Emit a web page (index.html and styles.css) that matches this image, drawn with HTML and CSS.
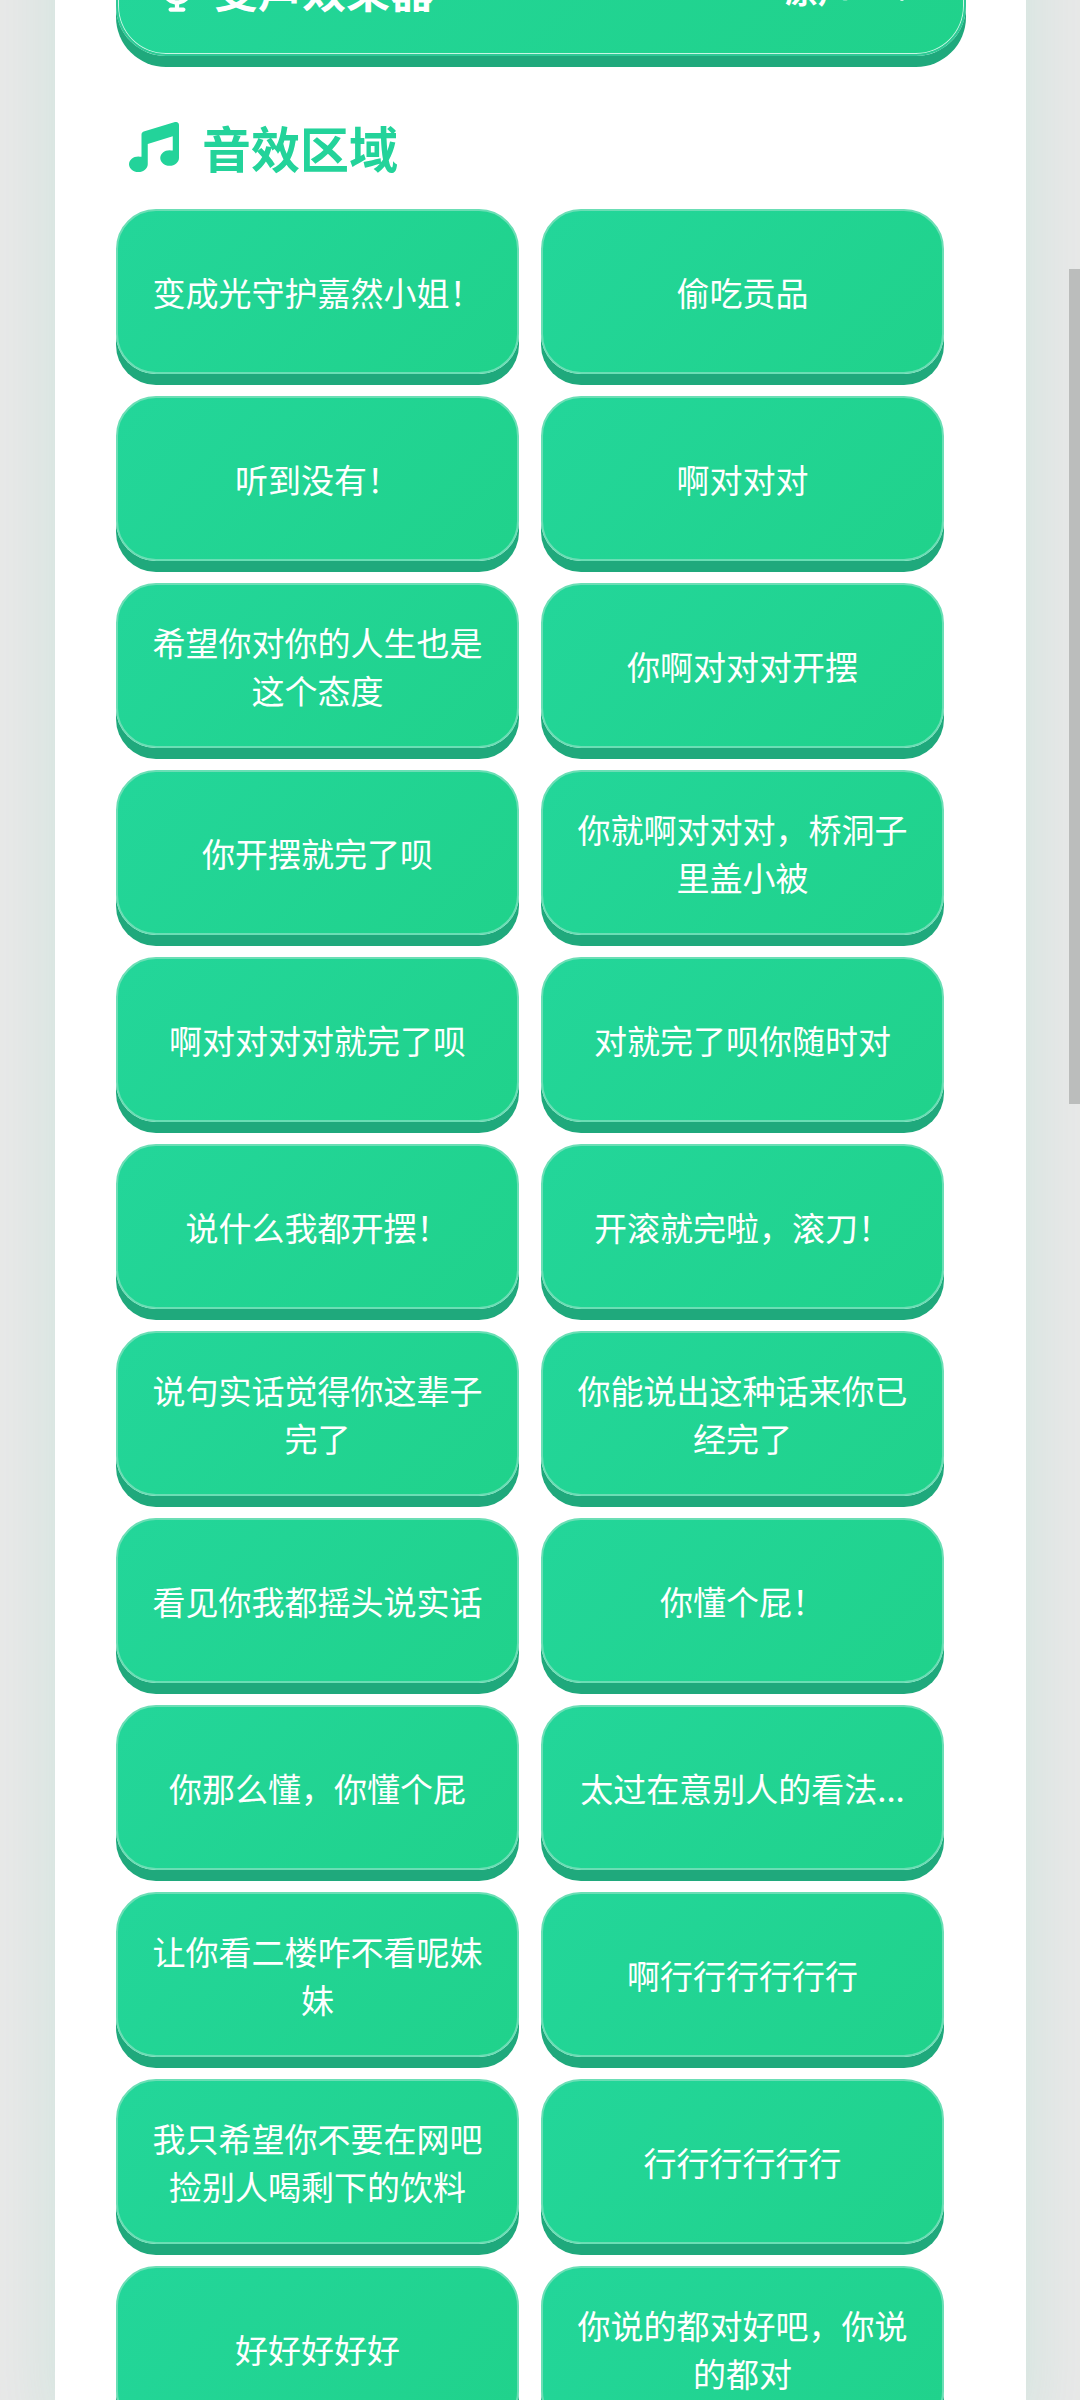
FILE: index.html
```html
<!DOCTYPE html>
<html lang="zh-CN">
<head>
<meta charset="utf-8">
<meta name="viewport" content="width=device-width, initial-scale=1">
<title>音效区域</title>
<link rel="stylesheet" href="styles.css">
</head>
<body>
<div class="viewport">
<main class="sheet">
  <button class="effector" type="button">
    <svg class="mic" viewBox="0 0 384 512" aria-hidden="true"><path d="M192 0c-53 0-96 43-96 96v160c0 53 43 96 96 96s96-43 96-96V96c0-53-43-96-96-96zM64 216c0-13-11-24-24-24s-24 11-24 24v40c0 89 66 163 152 174v34h-48c-13 0-24 11-24 24s11 24 24 24h144c13 0 24-11 24-24s-11-24-24-24h-48v-34c86-11 152-85 152-174v-40c0-13-11-24-24-24s-24 11-24 24v40c0 71-57 128-128 128S64 327 64 256z"/></svg>
    <span class="effector-name">变声效果器</span>
    <span class="effector-value">原声</span>
    <svg class="chevron" viewBox="0 0 24 24" aria-hidden="true"><path d="M5 9l7 8 7-8"/></svg>
  </button>
  <h2 class="heading">
    <svg class="note" viewBox="0 0 512 512" aria-hidden="true"><path d="M499 6c8 6 13 16 13 26v336c0 44-43 80-96 80s-96-36-96-80 43-80 96-80c11 0 22 2 32 5V147L192 224v208c0 44-43 80-96 80S0 476 0 432s43-80 96-80c11 0 22 2 32 5V128c0-14 9-27 23-31L471 1c10-3 20-1 28 5z"/></svg>
    音效区域
  </h2>
  <div class="sounds">
    <button class="sound" type="button">变成光守护嘉然小姐！</button>
    <button class="sound" type="button">偷吃贡品</button>
    <button class="sound" type="button">听到没有！</button>
    <button class="sound" type="button">啊对对对</button>
    <button class="sound" type="button">希望你对你的人生也是这个态度</button>
    <button class="sound" type="button">你啊对对对开摆</button>
    <button class="sound" type="button">你开摆就完了呗</button>
    <button class="sound" type="button">你就啊对对对，桥洞子里盖小被</button>
    <button class="sound" type="button">啊对对对对就完了呗</button>
    <button class="sound" type="button">对就完了呗你随时对</button>
    <button class="sound" type="button">说什么我都开摆！</button>
    <button class="sound" type="button">开滚就完啦，滚刀！</button>
    <button class="sound" type="button">说句实话觉得你这辈子完了</button>
    <button class="sound" type="button">你能说出这种话来你已经完了</button>
    <button class="sound" type="button">看见你我都摇头说实话</button>
    <button class="sound" type="button">你懂个屁！</button>
    <button class="sound" type="button">你那么懂，你懂个屁</button>
    <button class="sound" type="button">太过在意别人的看法...</button>
    <button class="sound" type="button">让你看二楼咋不看呢妹妹</button>
    <button class="sound" type="button">啊行行行行行行</button>
    <button class="sound" type="button">我只希望你不要在网吧捡别人喝剩下的饮料</button>
    <button class="sound" type="button">行行行行行行</button>
    <button class="sound" type="button">好好好好好</button>
    <button class="sound" type="button">你说的都对好吧，你说的都对</button>
  </div>
</main>
<div class="scroll-thumb"></div>
</div>
</body>
</html>
```
FILE: styles.css
```css
* {
  box-sizing: border-box;
}

body {
  margin: 0;
  font-family: "Noto Sans CJK SC", sans-serif;
  background: #e8e8e8;
}

/* The page is a scrolled viewport: content runs past both edges. */
.viewport {
  position: relative;
  height: 100vh;
  overflow: hidden;
}

.sheet {
  margin: 0 54px 0 55px;
  padding: 0 60px 0 61px;
  background: #fff;
  box-shadow: 0 0 60px rgba(33, 211, 149, 0.13);
}

.effector {
  display: flex;
  align-items: center;
  width: 100%;
  height: 134px;
  margin: -78px 0 0;
  padding: 0 42px;
  border: 2px solid #2fc996;
  border-radius: 50px;
  color: #fff;
  font: inherit;
  background: linear-gradient(135deg, #23d69a, #20d28b);
  box-shadow: 0 11px 0 #1fa97c, inset 0 0 0 1px #c9f5e4;
}

.mic {
  width: 34px;
  height: 46px;
  fill: currentColor;
}

.effector-name {
  flex: 1;
  margin-left: 20px;
  font-size: 44px;
  font-weight: 700;
  text-align: left;
}

.effector-value {
  font-size: 33px;
  font-weight: 700;
}

.chevron {
  width: 40px;
  height: 40px;
  margin-left: 31px;
  fill: none;
  stroke: currentColor;
  stroke-width: 4;
  stroke-linecap: round;
  stroke-linejoin: round;
}

.heading {
  display: flex;
  align-items: center;
  gap: 23px;
  margin: 55px 0 27px;
  padding-left: 13px;
  color: #23d39a;
  font-size: 49px;
  font-weight: 700;
  line-height: 71px;
}

.note {
  width: 50px;
  height: 50px;
  fill: currentColor;
}

.sounds {
  display: grid;
  grid-template-columns: 1fr 1fr;
  gap: 22px;
  margin-right: 22px;
}

.sound {
  height: 165px;
  padding: 0 34px;
  border: 2px solid #6bdeb5;
  border-radius: 40px;
  color: #fff;
  font: inherit;
  font-size: 33px;
  line-height: 48px;
  background: linear-gradient(135deg, #23d69a, #20d28b) border-box;
  box-shadow: 0 11px 0 #1fa97c;
}

.scroll-thumb {
  position: absolute;
  top: 269px;
  right: 0;
  width: 11px;
  height: 835px;
  background: #bbbdbc;
}
```
